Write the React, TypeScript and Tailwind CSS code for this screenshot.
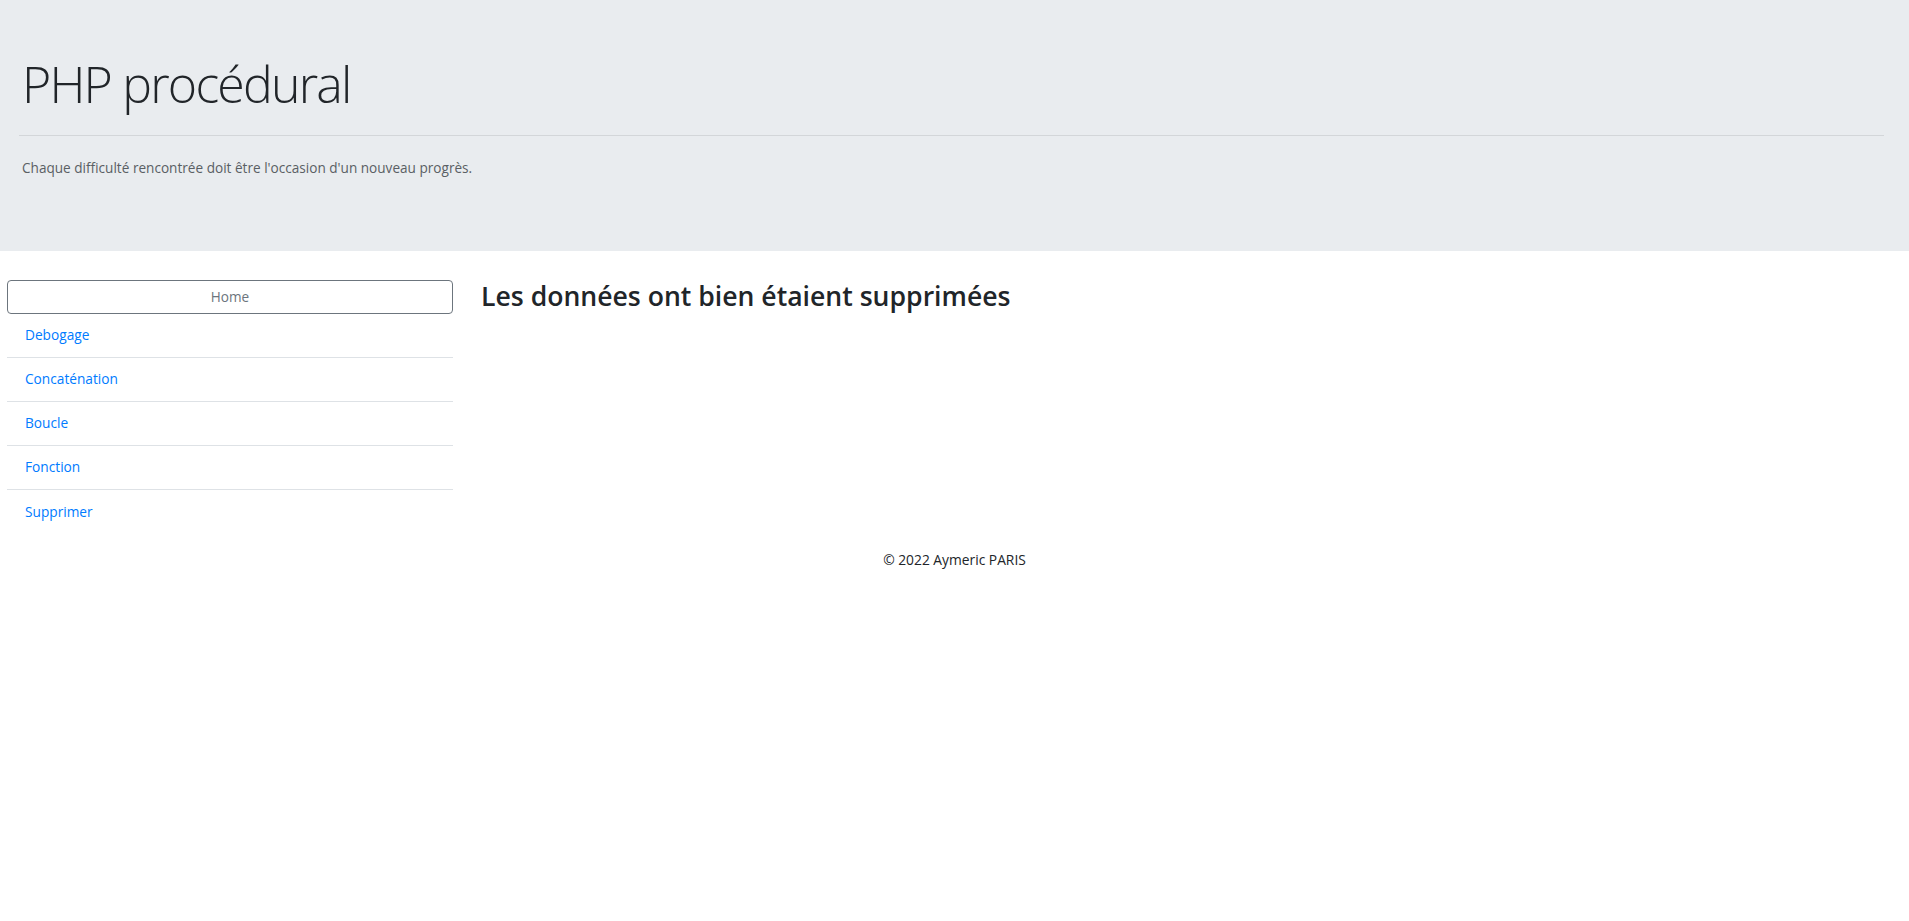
const links = ['Debogage', 'Concaténation', 'Boucle', 'Fonction', 'Supprimer'];

export default function App() {
  return (
    <div className="min-h-screen bg-white text-[#212529] font-['Segoe_UI','Open_Sans','Noto_Sans',sans-serif]">
      <header className="h-[251px] bg-[#e9ecef] px-[22px] pt-[54px]">
        <h1 className="text-[50px] leading-[1.2] font-light tracking-[-1.8px] text-[#212529]">PHP procédural</h1>
        <hr className="mt-[21px] border-t border-[#d3d6d9] -ml-[3px] mr-[3px]" />
        <p className="mt-[22px] text-[13.6px] text-[#5a5f64]">
          Chaque difficulté rencontrée doit être l'occasion d'un nouveau progrès.
        </p>
      </header>

      <div className="flex pt-[29px]">
        <nav className="ml-[7px] w-[446px] shrink-0">
          <a className="flex h-[34px] items-center justify-center rounded border border-[#6c757d] text-[13.6px] text-[#6c757d]">
            Home
          </a>
          <ul>
            {links.map((l, i) => (
              <li
                key={l}
                className={`flex h-[44px] items-center px-[18px] text-[13.7px] text-[#007bff] ${
                  i < links.length - 1 ? 'border-b border-[#dee2e6]' : ''
                }`}
              >
                {l}
              </li>
            ))}
          </ul>
        </nav>
        <main className="ml-[28px]">
          <h2 className="text-[26.6px] font-semibold leading-[1.2] mt-[1px]">
            Les données ont bien étaient supprimées
          </h2>
        </main>
      </div>

      <footer className="mt-[16px] text-center text-[13.8px] text-[#212529]">© 2022 Aymeric PARIS</footer>
    </div>
  );
}
